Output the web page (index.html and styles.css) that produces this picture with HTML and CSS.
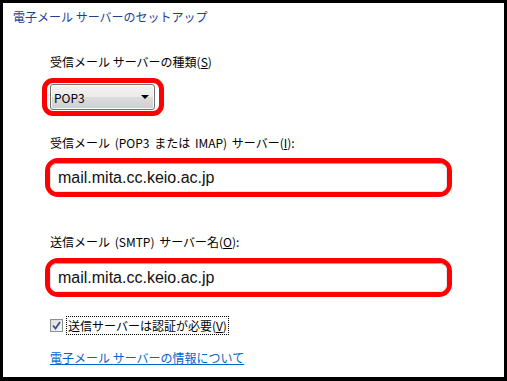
FILE: index.html
```html
<!DOCTYPE html>
<html lang="ja">
<head>
    <meta charset="UTF-8">
    <meta name="viewport" content="width=device-width, initial-scale=1.0">
    <title>電子メール サーバーのセットアップ</title>
    <link rel="stylesheet" href="styles.css">
</head>
<body>

<div class="panel">
    <div class="title">電子メール サーバーのセットアップ</div>

    <div class="form">
        <!-- 受信サーバーの種類 -->
        <div class="label label-first">受信メール サーバーの種類(<u>S</u>)</div>
        <div class="ring ring-select">
            <div class="select-box">
                <select class="select">
                    <option>POP3</option>
                    <option>IMAP</option>
                </select>
                <span class="arrow"></span>
            </div>
        </div>

        <!-- 受信サーバー -->
        <div class="label label-in">受信メール (POP3 または IMAP) サーバー(<u>I</u>):</div>
        <div class="ring ring-input">
            <input type="text" class="input-field" value="mail.mita.cc.keio.ac.jp">
        </div>

        <!-- 送信サーバー -->
        <div class="label label-out">送信メール (SMTP) サーバー名(<u>O</u>):</div>
        <div class="ring ring-input">
            <input type="text" class="input-field" value="mail.mita.cc.keio.ac.jp">
        </div>

        <div class="check-row">
            <span class="check">
                <svg width="9" height="9" viewBox="0 0 9 9">
                    <path d="M1 4.5 L3.5 7.5 L8 1" fill="none" stroke="#3b4f8c" stroke-width="1.8"/>
                </svg>
            </span>
            <span class="check-label">送信サーバーは認証が必要(<u>V</u>)</span>
        </div>

        <a href="#" class="link">電子メール サーバーの情報について</a>
    </div>
</div>

</body>
</html>
```

FILE: styles.css
```css
body {
    margin: 0;
    background-color: #000;
    font-family: "Noto Sans CJK JP", "Liberation Sans", sans-serif;
    font-size: 12px;
    color: #000;
}
.panel {
    margin: 3px 3px 4px 3px;
    height: 369px;
    padding-top: 5px;
    background-color: #fff;
}
.title {
    padding-left: 10px;
    line-height: 17px;
    color: #1c3f94;
}
.form {
    padding-left: 47px;
    display: flex;
    flex-direction: column;
    align-items: flex-start;
}
.label {
    line-height: 16px;
    white-space: nowrap;
}
.label-first {
    margin-top: 29px;
}
.label-in {
    margin-top: 19px;
    word-spacing: 2px;
}
.label-out {
    margin-top: 37px;
    word-spacing: 2px;
}
.ring {
    border: 5px solid #f00;
    border-radius: 13px;
    margin-left: -5px;
}
.ring-select {
    margin-top: 8px;
    margin-left: -8px;
    padding: 1px 4px 1px 3px;
    border-radius: 11px;
}
.ring-input {
    margin-top: 7px;
    width: 397px;
}
.select-box {
    position: relative;
    width: 105px;
    height: 26px;
}
.select {
    appearance: none;
    -webkit-appearance: none;
    width: 105px;
    height: 26px;
    margin: 0;
    padding: 0 0 0 3px;
    border: 1px solid #707070;
    border-radius: 3px;
    background: linear-gradient(#f3f3f3 0%, #ebebeb 48%, #dcdcdc 52%, #cfcfcf 100%);
    box-shadow: inset 0 0 0 1px #fcfcfc;
    font-family: "Noto Sans CJK JP", "Liberation Sans", sans-serif;
    font-size: 12px;
    color: #000;
    outline: none;
}
.arrow {
    position: absolute;
    right: 6px;
    top: 11px;
    width: 0;
    height: 0;
    border-left: 4px solid transparent;
    border-right: 4px solid transparent;
    border-top: 4px solid #000;
    pointer-events: none;
}
.input-field {
    display: block;
    box-sizing: border-box;
    width: 397px;
    height: 29px;
    margin: 0;
    padding: 0 0 0 7px;
    border: 1px solid #e3e9ef;
    border-top-color: #abadb3;
    border-radius: 7px;
    font-family: "Liberation Sans", sans-serif;
    font-size: 16px;
    color: #111;
    outline: none;
}
.label-out + .ring {
    margin-top: 8px;
}
.check-row {
    margin-top: 19px;
    height: 19px;
    display: flex;
    align-items: center;
}
.check {
    box-sizing: border-box;
    width: 13px;
    height: 13px;
    border: 1px solid #8e8f8f;
    background: linear-gradient(135deg, #dcdcdc, #f8f8f8);
    display: flex;
    align-items: center;
    justify-content: center;
}
.check-label {
    margin-left: 3px;
    padding: 0 1px;
    line-height: 17px;
    border: 1px dotted #000;
    white-space: nowrap;
}
.link {
    margin-top: 15px;
    line-height: 16px;
    color: #0066cc;
    text-decoration: underline;
}
```
